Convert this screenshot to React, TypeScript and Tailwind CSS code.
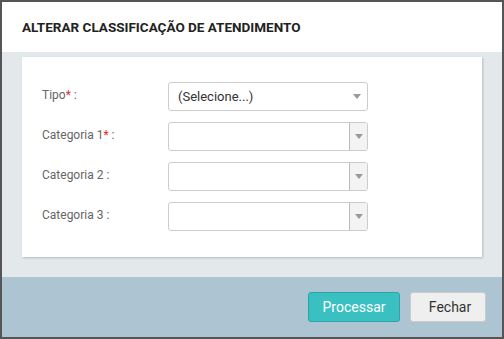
import React from 'react';

const Arrow: React.FC = () => (
  <svg width="8" height="5" viewBox="0 0 8 5" className="block">
    <path d="M0 0 L8 0 L4 5 Z" fill="#999" />
  </svg>
);

const SelectBox: React.FC<{ text?: string; button?: boolean }> = ({ text, button }) => (
  <div className="flex h-[29px] w-[200px] items-center rounded-[3px] border border-[#ccc] bg-white">
    <span className="flex-1 pl-[9px] text-[13px] text-[#333]">{text}</span>
    {button ? (
      <div className="flex h-full w-[18px] items-center justify-center border-l border-[#bbb] bg-[#f3f3f3] rounded-r-[3px]">
        <Arrow />
      </div>
    ) : (
      <div className="flex w-[20px] items-center justify-center">
        <Arrow />
      </div>
    )}
  </div>
);

const fields = [
  { label: 'Tipo', req: true, text: '(Selecione...)', button: false },
  { label: 'Categoria 1', req: true, text: '', button: true },
  { label: 'Categoria 2', req: false, text: '', button: true },
  { label: 'Categoria 3', req: false, text: '', button: true },
];

const App: React.FC = () => {
  return (
    <div className="flex h-[339px] w-[504px] flex-col border-2 border-[#555] font-['Roboto',sans-serif]">
      <div className="flex h-[50px] items-center bg-white px-[20px]">
        <h2 className="text-[13.5px] font-bold text-[#222]">ALTERAR CLASSIFICAÇÃO DE ATENDIMENTO</h2>
      </div>
      <div className="bg-[#e3e8eb] px-[20px] pt-[5px] pb-[20px]">
        <div className="flex h-[200px] flex-col gap-[11px] bg-white px-[20px] pt-[25px] shadow-[1px_1px_2px_rgba(0,0,0,0.2)]">
          {fields.map((f) => (
            <div key={f.label} className="flex items-center">
              <label className="w-[126px] pb-[4px] text-[12px] text-[#666]">
                {f.label}
                {f.req && <span className="text-[#e22]">*</span>} :
              </label>
              <SelectBox text={f.text} button={f.button} />
            </div>
          ))}
        </div>
      </div>
      <div className="flex flex-1 items-center justify-end gap-[10px] bg-[#adc5d2] pr-[16px]">
        <button className="h-[30px] w-[92px] rounded-[3px] border border-[#2ba6a8] bg-[#3bc0c2] text-[14px] text-white">
          Processar
        </button>
        <button className="h-[30px] w-[76px] rounded-[3px] border border-[#ccc] bg-[#efefef] pl-[4px] text-[14px] text-[#333]">
          Fechar
        </button>
      </div>
    </div>
  );
};

export default App;
